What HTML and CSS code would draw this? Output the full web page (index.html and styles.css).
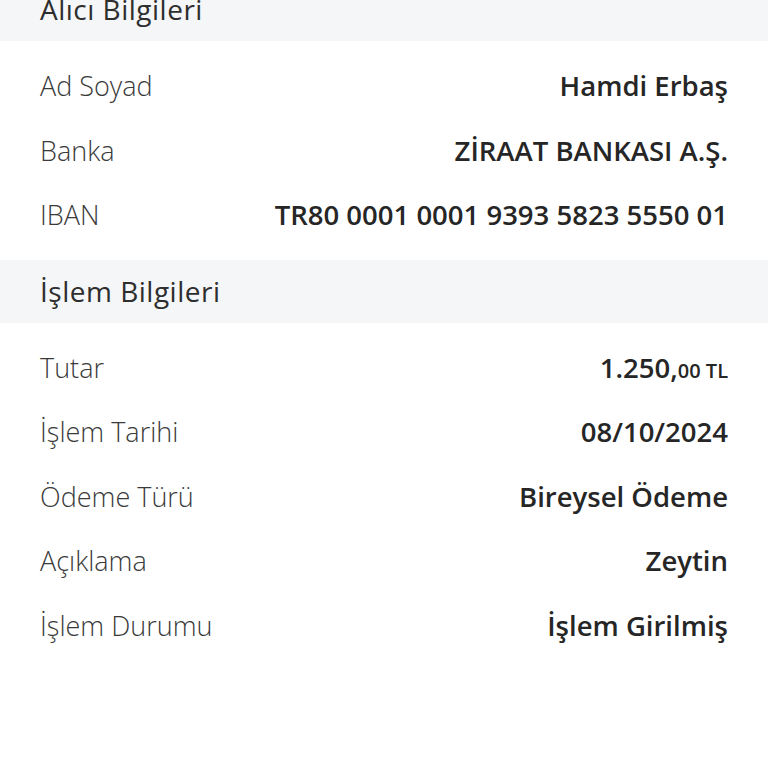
FILE: index.html
```html
<!DOCTYPE html>
<html lang="tr">
<head>
<meta charset="utf-8">
<link rel="stylesheet" href="styles.css">
</head>
<body>
<div class="page">
  <section class="section">
    <div class="section-title">Alıcı Bilgileri</div>
    <div class="rows">
      <div class="row"><span class="label">Ad Soyad</span><span class="value">Hamdi Erbaş</span></div>
      <div class="row"><span class="label">Banka</span><span class="value">ZİRAAT BANKASI A.Ş.</span></div>
      <div class="row"><span class="label">IBAN</span><span class="value">TR80 0001 0001 9393 5823 5550 01</span></div>
    </div>
  </section>
  <section class="section">
    <div class="section-title">İşlem Bilgileri</div>
    <div class="rows">
      <div class="row"><span class="label">Tutar</span><span class="value">1.250,<span class="small">00 TL</span></span></div>
      <div class="row"><span class="label">İşlem Tarihi</span><span class="value">08/10/2024</span></div>
      <div class="row"><span class="label">Ödeme Türü</span><span class="value">Bireysel Ödeme</span></div>
      <div class="row"><span class="label">Açıklama</span><span class="value">Zeytin</span></div>
      <div class="row"><span class="label">İşlem Durumu</span><span class="value">İşlem Girilmiş</span></div>
    </div>
  </section>
</div>
</body>
</html>
```
FILE: styles.css
```css
html, body {
  margin: 0;
  padding: 0;
  background: #ffffff;
}
body {
  font-family: "Open Sans", "Noto Sans", sans-serif;
  color: #2b2b2b;
}
.page {
  margin-top: -22px;
}
.section-title {
  background: #f5f6f8;
  height: 63px;
  line-height: 63px;
  padding: 0 40px;
  font-size: 28px;
  font-weight: 400;
  color: #2e2e2e;
  letter-spacing: 0.5px;
}
.rows {
  padding: 13px 40px 12px;
}
.row {
  display: flex;
  justify-content: space-between;
  align-items: baseline;
  height: 64.5px;
  line-height: 64.5px;
}
.label {
  font-size: 27px;
  font-weight: 300;
  color: #3a3a3a;
}
.value {
  font-size: 27.5px;
  font-weight: 600;
  color: #262626;
}
.small {
  font-size: 20px;
}
```
